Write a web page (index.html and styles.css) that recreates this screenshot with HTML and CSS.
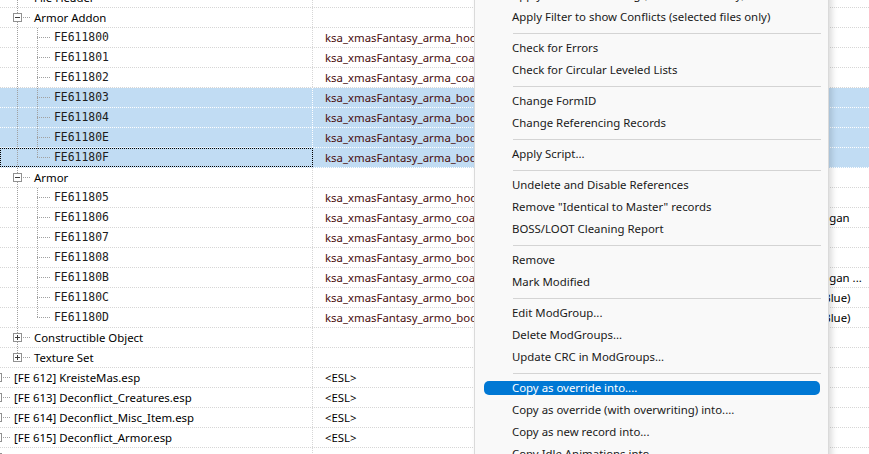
FILE: index.html
```html
<!DOCTYPE html>
<html lang="en">
<head>
    <meta charset="UTF-8">
    <title>xEdit - Records</title>
    <link rel="stylesheet" href="styles.css">
</head>
<body>

    <div class="view">
        <div class="tree">
            <div class="row">
                <div class="c1"><span class="g"></span><span class="g tee"></span><span class="lbl">File Header</span></div>
                <div class="c2"></div><div class="c3"></div>
            </div>
            <div class="row">
                <div class="c1"><span class="g"></span><span class="g tee"><i class="box minus"></i></span><span class="lbl">Armor Addon</span></div>
                <div class="c2"></div><div class="c3"></div>
            </div>
            <div class="row">
                <div class="c1"><span class="g"></span><span class="g pipe"></span><span class="g tee"></span><span class="lbl id">FE611800</span></div>
                <div class="c2 ed">ksa_xmasFantasy_arma_hood</div><div class="c3"></div>
            </div>
            <div class="row">
                <div class="c1"><span class="g"></span><span class="g pipe"></span><span class="g tee"></span><span class="lbl id">FE611801</span></div>
                <div class="c2 ed">ksa_xmasFantasy_arma_coat</div><div class="c3"></div>
            </div>
            <div class="row">
                <div class="c1"><span class="g"></span><span class="g pipe"></span><span class="g tee"></span><span class="lbl id">FE611802</span></div>
                <div class="c2 ed">ksa_xmasFantasy_arma_coat_b</div><div class="c3"></div>
            </div>
            <div class="row sel">
                <div class="c1"><span class="g"></span><span class="g pipe"></span><span class="g tee"></span><span class="lbl id">FE611803</span></div>
                <div class="c2 ed">ksa_xmasFantasy_arma_body</div><div class="c3"></div>
            </div>
            <div class="row sel">
                <div class="c1"><span class="g"></span><span class="g pipe"></span><span class="g tee"></span><span class="lbl id">FE611804</span></div>
                <div class="c2 ed">ksa_xmasFantasy_arma_body_b</div><div class="c3"></div>
            </div>
            <div class="row sel">
                <div class="c1"><span class="g"></span><span class="g pipe"></span><span class="g tee"></span><span class="lbl id">FE61180E</span></div>
                <div class="c2 ed">ksa_xmasFantasy_arma_body_c</div><div class="c3"></div>
            </div>
            <div class="row sel focus">
                <div class="c1"><span class="g"></span><span class="g pipe"></span><span class="g end"></span><span class="lbl id">FE61180F</span></div>
                <div class="c2 ed">ksa_xmasFantasy_arma_body_d</div><div class="c3"></div>
            </div>
            <div class="row">
                <div class="c1"><span class="g"></span><span class="g tee"><i class="box minus"></i></span><span class="lbl">Armor</span></div>
                <div class="c2"></div><div class="c3"></div>
            </div>
            <div class="row">
                <div class="c1"><span class="g"></span><span class="g pipe"></span><span class="g tee"></span><span class="lbl id">FE611805</span></div>
                <div class="c2 ed">ksa_xmasFantasy_armo_hood</div><div class="c3">Xmas Hood</div>
            </div>
            <div class="row">
                <div class="c1"><span class="g"></span><span class="g pipe"></span><span class="g tee"></span><span class="lbl id">FE611806</span></div>
                <div class="c2 ed">ksa_xmasFantasy_armo_coat</div><div class="c3">Xmas Fantasy Cardigan</div>
            </div>
            <div class="row">
                <div class="c1"><span class="g"></span><span class="g pipe"></span><span class="g tee"></span><span class="lbl id">FE611807</span></div>
                <div class="c2 ed">ksa_xmasFantasy_armo_body</div><div class="c3">Xmas Body</div>
            </div>
            <div class="row">
                <div class="c1"><span class="g"></span><span class="g pipe"></span><span class="g tee"></span><span class="lbl id">FE611808</span></div>
                <div class="c2 ed">ksa_xmasFantasy_armo_body_b</div><div class="c3">Xmas Body</div>
            </div>
            <div class="row">
                <div class="c1"><span class="g"></span><span class="g pipe"></span><span class="g tee"></span><span class="lbl id">FE61180B</span></div>
                <div class="c2 ed">ksa_xmasFantasy_armo_coat_b</div><div class="c3">Xmas Fantasy Cardigan ...</div>
            </div>
            <div class="row">
                <div class="c1"><span class="g"></span><span class="g pipe"></span><span class="g tee"></span><span class="lbl id">FE61180C</span></div>
                <div class="c2 ed">ksa_xmasFantasy_armo_body_c</div><div class="c3">Xmas Fantasy Tie (Blue)</div>
            </div>
            <div class="row">
                <div class="c1"><span class="g"></span><span class="g pipe"></span><span class="g end"></span><span class="lbl id">FE61180D</span></div>
                <div class="c2 ed">ksa_xmasFantasy_armo_body_d</div><div class="c3">Xmas Fantasy Tie (Blue)</div>
            </div>
            <div class="row">
                <div class="c1"><span class="g"></span><span class="g tee"><i class="box plus"></i></span><span class="lbl">Constructible Object</span></div>
                <div class="c2"></div><div class="c3"></div>
            </div>
            <div class="row">
                <div class="c1"><span class="g"></span><span class="g end"><i class="box plus"></i></span><span class="lbl">Texture Set</span></div>
                <div class="c2"></div><div class="c3"></div>
            </div>
            <div class="row">
                <div class="c1"><span class="g tee"><i class="box plus"></i></span><span class="lbl">[FE 612] KreisteMas.esp</span></div>
                <div class="c2">&lt;ESL&gt;</div><div class="c3"></div>
            </div>
            <div class="row">
                <div class="c1"><span class="g tee"><i class="box plus"></i></span><span class="lbl">[FE 613] Deconflict_Creatures.esp</span></div>
                <div class="c2">&lt;ESL&gt;</div><div class="c3"></div>
            </div>
            <div class="row">
                <div class="c1"><span class="g tee"><i class="box plus"></i></span><span class="lbl">[FE 614] Deconflict_Misc_Item.esp</span></div>
                <div class="c2">&lt;ESL&gt;</div><div class="c3"></div>
            </div>
            <div class="row">
                <div class="c1"><span class="g tee"><i class="box plus"></i></span><span class="lbl">[FE 615] Deconflict_Armor.esp</span></div>
                <div class="c2">&lt;ESL&gt;</div><div class="c3"></div>
            </div>
            <div class="row">
                <div class="c1"><span class="g tee"><i class="box plus"></i></span><span class="lbl">[FE 616] Lootfilter_merged.esp</span></div>
                <div class="c2">&lt;ESL&gt;</div><div class="c3"></div>
            </div>
        </div>

        <!-- right-click menu over the tree -->
        <div class="menu">
            <div class="mi"><span>Apply Filter for Cleaning (selected files only)</span></div>
            <div class="mi"><span>Apply Filter to show Conflicts (selected files only)</span></div>
            <div class="sep"></div>
            <div class="mi"><span>Check for Errors</span></div>
            <div class="mi"><span>Check for Circular Leveled Lists</span></div>
            <div class="sep"></div>
            <div class="mi"><span>Change FormID</span></div>
            <div class="mi"><span>Change Referencing Records</span></div>
            <div class="sep"></div>
            <div class="mi"><span>Apply Script...</span></div>
            <div class="sep"></div>
            <div class="mi"><span>Undelete and Disable References</span></div>
            <div class="mi"><span>Remove "Identical to Master" records</span></div>
            <div class="mi"><span>BOSS/LOOT Cleaning Report</span></div>
            <div class="sep"></div>
            <div class="mi"><span>Remove</span></div>
            <div class="mi"><span>Mark Modified</span></div>
            <div class="sep"></div>
            <div class="mi"><span>Edit ModGroup...</span></div>
            <div class="mi"><span>Delete ModGroups...</span></div>
            <div class="mi"><span>Update CRC in ModGroups...</span></div>
            <div class="sep"></div>
            <div class="mi hot"><span>Copy as override into....</span></div>
            <div class="mi"><span>Copy as override (with overwriting) into....</span></div>
            <div class="mi"><span>Copy as new record into...</span></div>
            <div class="mi"><span>Copy Idle Animations into...</span></div>
        </div>
    </div>

</body>
</html>
```

FILE: styles.css
```css
body {
    margin: 0;
    background-color: #fff;
    font-family: "Noto Sans", "Segoe UI", sans-serif;
    font-size: 11.4px;
    color: #000;
    overflow: hidden;
}

.view {
    position: relative;
    height: 454px;
    overflow: hidden;
}

.tree {
    margin-top: -12px; /* File Header row is scrolled half out */
}

.row {
    display: grid;
    grid-template-columns: 313px 400px 153px 1fr;
    height: 20px;
    box-sizing: border-box;
    border-bottom: 1px dotted #d6d6d6;
    line-height: 19px;
    white-space: nowrap;
}

.row.sel {
    background-color: #c1dcf3;
    border-bottom-color: #fff;
}

.c1 {
    display: flex;
    overflow: hidden;
    border-right: 1px dotted #d6d6d6;
}

.row.sel .c1 {
    border-right-color: #fff;
}

.row.focus .c1 {
    outline: 1px dotted #000;
    outline-offset: -1px;
}

.c2 {
    padding-left: 12px;
    overflow: hidden;
}

.c2.ed {
    color: #4a0d0d;
}

.c3 {
    padding-left: 12px;
    overflow: hidden;
}

/* tree guides: dotted lines drawn as backgrounds */
.g {
    --dv: repeating-linear-gradient(#a0a0a0 0 1px, transparent 1px 2px);
    --dh: repeating-linear-gradient(90deg, #a0a0a0 0 1px, transparent 1px 2px);
    display: block;
    flex: none;
    width: 20px;
}

.c1 .g:first-child {
    margin-left: -13px;
}

.g.pipe {
    background: var(--dv) 10px 0 / 1px 100% no-repeat;
}

.g.tee {
    width: 23px;
    background: var(--dv) 10px 0 / 1px 100% no-repeat, var(--dh) 10px 9px / 13px 1px no-repeat;
}

.g.end {
    width: 23px;
    background: var(--dv) 10px 0 / 1px 10px no-repeat, var(--dh) 10px 9px / 13px 1px no-repeat;
}

.box {
    display: block;
    width: 9px;
    height: 9px;
    margin: 5px 0 0 6px;
    box-sizing: border-box;
    border: 1px solid #919191;
    background-color: #fff;
}

.box.minus {
    background: linear-gradient(#3c3c3c, #3c3c3c) center / 5px 1px no-repeat, #fff;
}

.box.plus {
    background: linear-gradient(#3c3c3c, #3c3c3c) center / 5px 1px no-repeat,
                linear-gradient(#3c3c3c, #3c3c3c) center / 1px 5px no-repeat, #fff;
}

.lbl {
    margin-left: 4px;
}

.lbl.id {
    font-family: "DejaVu Sans Mono", monospace;
    font-size: 11.4px;
    color: #1c1c1c;
}

/* context menu */
.menu {
    position: absolute;
    left: 474px;
    top: -17px;
    width: 355px;
    box-sizing: border-box;
    background-color: #f9f9f9;
    border: 1px solid #dadada;
    box-shadow: 3px 2px 6px rgba(0, 0, 0, 0.14);
    color: #1a1a1a;
}

.mi {
    height: 22px;
    display: flex;
    align-items: center;
    padding: 0 8px 0 9px;
    white-space: nowrap;
}

.mi span {
    flex: 1;
    height: 14px;
    line-height: 14px;
    padding-left: 28px;
    border-radius: 5px;
}

.mi.hot span {
    background-color: #0078d4;
    color: #fff;
}

.sep {
    height: 9px;
    box-sizing: border-box;
    padding-top: 5px;
    margin: 0 7px 0 38px;
}

.sep::before {
    content: "";
    display: block;
    height: 1px;
    background-color: #d4d4d4;
}
```
